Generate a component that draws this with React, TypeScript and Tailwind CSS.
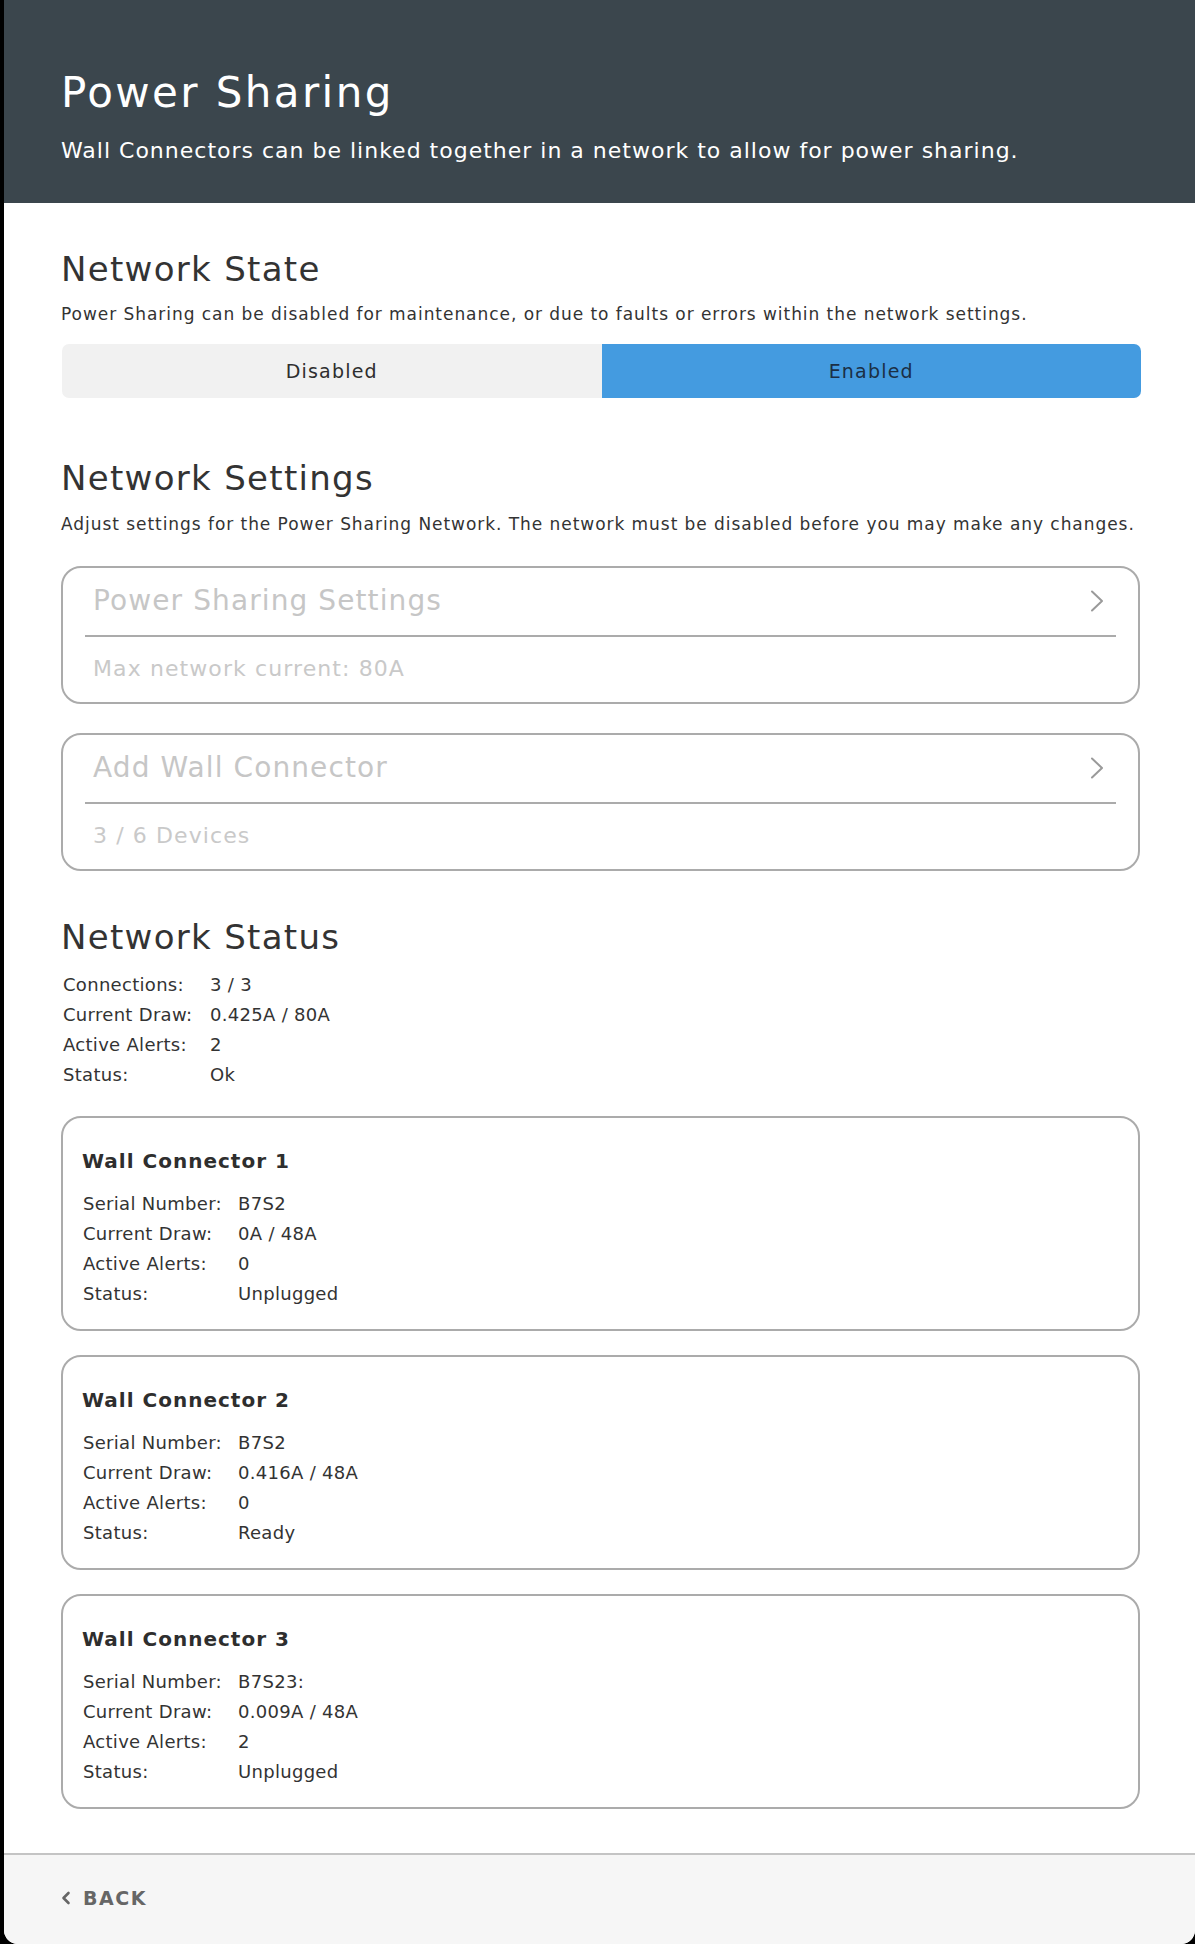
import React from "react";

const font = { fontFamily: '"DejaVu Sans", "Open Sans", sans-serif' };

function Chevron() {
  return (
    <svg width="14" height="22" viewBox="0 0 14 22" fill="none" className="shrink-0">
      <path d="M2 1.5 L12 11 L2 20.5" stroke="#9a9a9a" strokeWidth="2" strokeLinecap="round" strokeLinejoin="round" />
    </svg>
  );
}

function SettingCard({ title, sub }: { title: string; sub: string }) {
  return (
    <div className="rounded-[20px] border-2 border-[#ababab] pt-[15px] pb-[18px]">
      <div className="flex items-center justify-between pl-[30px] pr-[34px]">
        <div className="text-[28px] leading-[36px] text-[#c6c6c6] tracking-[1.1px]">{title}</div>
        <Chevron />
      </div>
      <div className="mx-[22px] mt-[16px] h-[2px] bg-[#ababab]" />
      <div className="mt-[17px] pl-[30px] text-[22px] leading-[30px] text-[#c9c9c9] tracking-[1.1px]">{sub}</div>
    </div>
  );
}

function Rows({ rows, labelW }: { rows: [string, string][]; labelW: string }) {
  return (
    <div className="flex flex-col">
      {rows.map(([k, v]) => (
        <div key={k} className="flex text-[18px] leading-[30px] text-[#333] tracking-[0.3px]">
          <div className={labelW}>{k}</div>
          <div>{v}</div>
        </div>
      ))}
    </div>
  );
}

function ConnectorCard({ n, rows }: { n: number; rows: [string, string][] }) {
  return (
    <div className="rounded-[20px] border-2 border-[#ababab] pt-[29px] pb-[20px] pl-[19px]">
      <div className="text-[20px] leading-[28px] font-bold text-[#2e2e2e] tracking-[1px]">Wall Connector {n}</div>
      <div className="mt-[14px] pl-[1px]">
        <Rows rows={rows} labelW="w-[155px]" />
      </div>
    </div>
  );
}

export default function App() {
  return (
    <div className="min-h-[1944px] w-full bg-black pl-[4px]" style={font}>
      <div className="flex min-h-[1944px] flex-col overflow-hidden rounded-b-[14px] bg-white">
        <header className="h-[203px] bg-[#3b464d] pl-[57px] pt-[68px]">
          <h1 className="text-[42px] leading-[50px] text-white tracking-[2.4px]">Power Sharing</h1>
          <p className="mt-[18px] text-[22px] leading-[30px] text-white tracking-[1px]">
            Wall Connectors can be linked together in a network to allow for power sharing.
          </p>
        </header>

        <main className="flex-1 pl-[57px] pr-[52px]">
          <h2 className="mt-[46px] text-[34px] leading-[40px] text-[#333] tracking-[1.3px]">Network State</h2>
          <p className="mt-[13px] text-[17px] leading-[24px] text-[#333] tracking-[0.95px]">
            Power Sharing can be disabled for maintenance, or due to faults or errors within the network settings.
          </p>
          <div className="mt-[18px] flex h-[54px] overflow-hidden rounded-[7px] ml-[1px] mr-[2px] text-[19px] tracking-[1.2px]">
            <div className="flex flex-1 items-center justify-center bg-[#f1f1f1] text-[#2e2e2e]">Disabled</div>
            <div className="flex flex-1 items-center justify-center bg-[#449be0] text-[#1b2f45]">Enabled</div>
          </div>

          <h2 className="mt-[60px] text-[34px] leading-[40px] text-[#333] tracking-[1.3px]">Network Settings</h2>
          <p className="mt-[14px] text-[17px] leading-[24px] text-[#333] tracking-[0.95px]">
            Adjust settings for the Power Sharing Network. The network must be disabled before you may make any changes.
          </p>
          <div className="mt-[30px] flex flex-col gap-[29px] pr-[3px]">
            <SettingCard title="Power Sharing Settings" sub="Max network current: 80A" />
            <SettingCard title="Add Wall Connector" sub="3 / 6 Devices" />
          </div>

          <h2 className="mt-[46px] text-[34px] leading-[40px] text-[#333] tracking-[1.3px]">Network Status</h2>
          <div className="mt-[13px] pl-[2px]">
            <Rows
              labelW="w-[147px]"
              rows={[
                ["Connections:", "3 / 3"],
                ["Current Draw:", "0.425A / 80A"],
                ["Active Alerts:", "2"],
                ["Status:", "Ok"],
              ]}
            />
          </div>

          <div className="mt-[26px] flex flex-col gap-[24px] pr-[3px]">
            <ConnectorCard
              n={1}
              rows={[
                ["Serial Number:", "B7S2"],
                ["Current Draw:", "0A / 48A"],
                ["Active Alerts:", "0"],
                ["Status:", "Unplugged"],
              ]}
            />
            <ConnectorCard
              n={2}
              rows={[
                ["Serial Number:", "B7S2"],
                ["Current Draw:", "0.416A / 48A"],
                ["Active Alerts:", "0"],
                ["Status:", "Ready"],
              ]}
            />
            <ConnectorCard
              n={3}
              rows={[
                ["Serial Number:", "B7S23:"],
                ["Current Draw:", "0.009A / 48A"],
                ["Active Alerts:", "2"],
                ["Status:", "Unplugged"],
              ]}
            />
          </div>
          <div className="h-[44px]" />
        </main>

        <footer className="h-[91px] border-t-2 border-[#c4c4c4] bg-[#f6f6f6] pl-[57px] pt-[31px]">
          <div className="flex items-center gap-[12px] text-[#666]">
            <svg width="10" height="14" viewBox="0 0 10 14" fill="none">
              <path d="M7.5 2 L2.5 7 L7.5 12" stroke="#666" strokeWidth="2.6" strokeLinecap="round" strokeLinejoin="round" />
            </svg>
            <span className="text-[19px] leading-[24px] font-bold tracking-[1.5px]">BACK</span>
          </div>
        </footer>
      </div>
    </div>
  );
}
